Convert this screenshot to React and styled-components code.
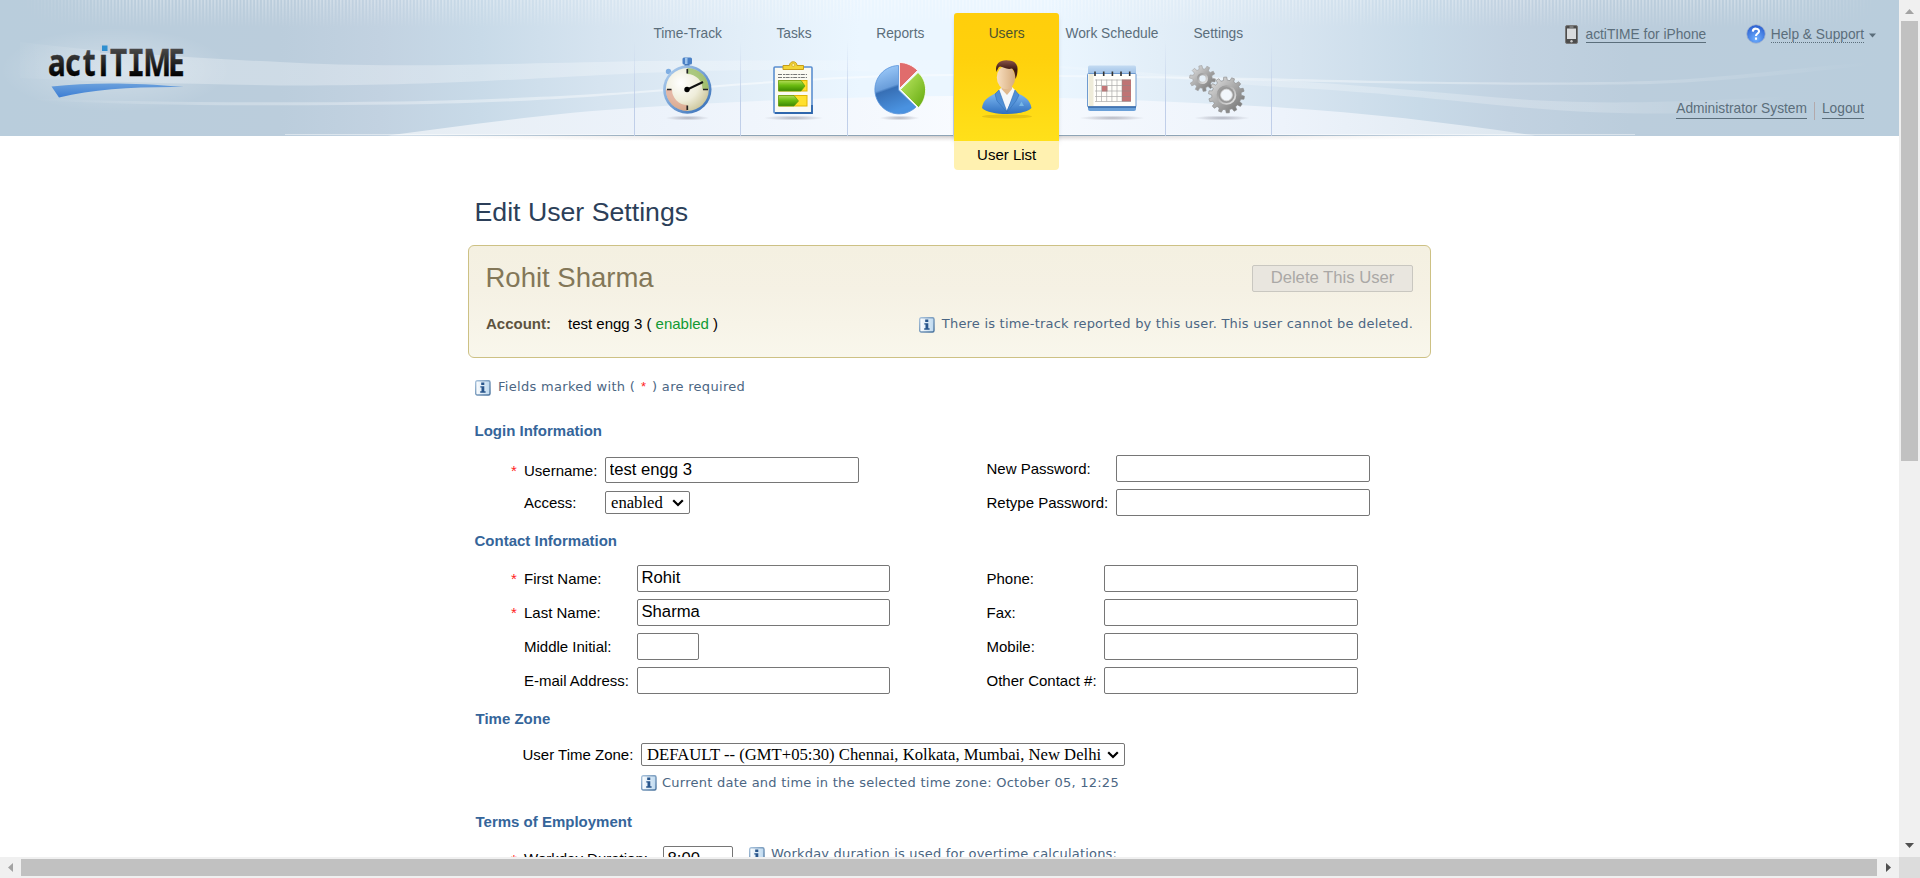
import React from "react";
import styled, { createGlobalStyle, css } from "styled-components";

const sans = `"Liberation Sans", Arial, sans-serif`;
const serif = `"Liberation Serif", "Times New Roman", serif`;
const verdana = `Verdana, "DejaVu Sans", sans-serif`;

const GlobalStyle = createGlobalStyle`
  html, body { margin: 0; padding: 0; background: #fff; }
  body { overflow: hidden; }
  * { box-sizing: border-box; }
`;

const Window = styled.div`
  display: grid;
  grid-template: 857px 21px / 1899px 21px;
  width: 1920px;
  height: 878px;
  overflow: hidden;
  font: 15px/17px ${sans};
  color: #000;
`;

const Page = styled.div`
  overflow: hidden;
  background: #fff;
`;

/* ---------- header ---------- */

const Header = styled.header`
  position: relative;
  display: grid;
  grid-template-columns: 634px 638px 1fr;
  height: 136px;
  background: linear-gradient(
    90deg,
    #b9cddc 0, #bbcddc 280px, #c2d2e1 380px, #c8dae8 480px, #d6e4f0 600px, #e2eef8 740px,
    #ebf6ff 860px, #ebf6ff 1050px, #e2eef8 1160px, #d6e4f0 1300px, #c8dae8 1420px,
    #c2d2e1 1510px, #bbcddc 1630px, #b9cddc 1899px
  );
`;

const Waves = styled.svg`
  position: absolute;
  left: 0;
  top: 0;
  pointer-events: none;
`;

const Brand = styled.div`
  position: relative;
`;

const BrandMark = styled.svg`
  display: block;
  margin: 36px 0 0 40px;
`;

const Nav = styled.nav`
  position: relative;
  display: flex;
`;

const NavLine = styled.span`
  flex: none;
  width: 1px;
  height: 136px;
  background: linear-gradient(rgba(190, 205, 232, 0) 30%, rgba(190, 205, 232, 0.95) 75%);
`;

const NavItem = styled.a`
  position: relative;
  display: flex;
  flex-direction: column;
  flex: 1 1 0;
  min-width: 0;
  height: 136px;
  padding-top: 13px;
  color: #5b6e7b;
  text-decoration: none;
  ${(p) => p.$active && css`
    z-index: 1;
    margin: 0 -1px 0 0;
    color: #4b5330;
  `}
`;

const NavFace = styled.span`
  display: flex;
  flex-direction: column;
  align-items: center;
  flex: none;
  height: 128px;
  ${(p) => p.$active && css`
    border-radius: 3px 3px 0 0;
    background: linear-gradient(#ffce0c, #ffd10c 35%, #ffe01a);
    box-shadow: 0 3px 5px -2px rgba(90, 110, 130, 0.5);
  `}
`;

const NavLabel = styled.span`
  margin-top: 13px;
  font-size: 13.75px;
  line-height: 15px;
  white-space: nowrap;
`;

const NavIcon = styled.svg`
  display: block;
  flex: none;
  margin-top: 9px;
`;

const SubMenu = styled.span`
  flex: none;
  height: 29px;
  border-radius: 0 0 4px 4px;
  background: #fff1b0;
  color: #000;
  font-size: 15px;
  line-height: 28px;
  text-align: center;
`;

const Tools = styled.div`
  position: relative;
  display: flex;
  flex-direction: column;
  justify-content: space-between;
  padding: 24px 23px 16px 0;
  color: #5b6e7b;
  font-size: 13.75px;
  line-height: 15px;
`;

const ToolRow = styled.div`
  display: flex;
  align-items: flex-start;
  justify-content: flex-end;
  padding-right: ${(p) => p.$right || 0}px;
`;

const ToolLink = styled.a`
  margin-top: ${(p) => p.$top || 0}px;
  padding-bottom: ${(p) => p.$pad || 0}px;
  border-bottom: 1px ${(p) => (p.$dotted ? "dotted" : "solid")} #5b6e7b;
  color: inherit;
  text-decoration: none;
`;

const ToolIcon = styled.svg`
  display: block;
  flex: none;
  margin: ${(p) => p.$m};
`;

const Divider = styled.span`
  width: 1px;
  height: 18px;
  margin: 1px 7px 0;
  background: #b3a9ab;
`;

/* ---------- content ---------- */

const Main = styled.main`
  padding: 61px 0 0 468px;
`;

const Title = styled.h1`
  margin: 0 0 18px 6.5px;
  color: #2c3f59;
  font-size: 26.7px;
  font-weight: 400;
  line-height: 30px;
`;

const UserPanel = styled.section`
  display: flex;
  flex-direction: column;
  width: 963px;
  height: 113px;
  padding: 19px 17px 0 17px;
  border: 1px solid #cdc184;
  border-radius: 6px;
  background: linear-gradient(#f4f0e1, #f5f1e4 40%, #f9f7ec);
`;

const PanelRow = styled.div`
  display: flex;
  align-items: flex-start;
  justify-content: space-between;
`;

const UserName = styled.h2`
  margin: -3px 0 0 -0.5px;
  color: #837758;
  font-size: 27.5px;
  font-weight: 400;
  line-height: 31px;
`;

const DeleteButton = styled.button`
  width: 161px;
  height: 27px;
  padding: 0 0 2px;
  border: 1px solid #c9c7c0;
  border-radius: 2px;
  background: #e9e6df;
  color: #aaa8a6;
  font: 16.67px/19px ${sans};
`;

const Account = styled.div`
  margin-top: 22px;
  b { margin-right: 17px; color: #5d533f; }
  span { color: #109a33; }
`;

const Hint = styled.div`
  display: flex;
  align-items: flex-start;
  gap: ${(p) => p.$gap || 8}px;
  margin: ${(p) => p.$m || 0};
  color: #4b6683;
  font: 13px/15px ${verdana};
  letter-spacing: ${(p) => p.$ls || 0.2}px;
  white-space: pre;
  svg { flex: none; display: block; }
`;

const HintText = styled.span`
  margin-top: ${(p) => p.$shift || 0}px;
`;

const Star = styled.span`
  margin: 0 1.5px;
  color: #f22;
  font-family: ${sans};
  letter-spacing: 0;
`;

const SectionTitle = styled.h3`
  margin: ${(p) => p.$top || 16}px 0 0 ${(p) => p.$left || 6.5}px;
  color: #35659a;
  font-size: 15px;
  line-height: 17px;
`;

const Columns = styled.div`
  display: grid;
  grid-template-columns: 475.5px 1fr;
  margin: 16px 0 0 43px;
`;

const SingleField = styled.div`
  margin: 16px 0 0 ${(p) => p.$left || 43}px;
`;

const Fields = styled.div`
  display: flex;
  flex-direction: column;
  gap: ${(p) => (p.$gap === undefined ? 7 : p.$gap)}px;
  padding-top: ${(p) => p.$top || 0}px;
`;

const Field = styled.div`
  display: flex;
  align-items: flex-start;
`;

const Mark = styled.span`
  flex: none;
  width: 13px;
  line-height: 27px;
  color: #f22;
`;

const Label = styled.label`
  flex: none;
  width: ${(p) => p.$w}px;
  line-height: ${(p) => p.$lh || 27}px;
  white-space: nowrap;
`;

const Input = styled.input`
  width: ${(p) => p.$w || 254}px;
  height: ${(p) => p.$h || 27}px;
  margin: 0;
  padding: 0 3px ${(p) => (p.$h ? 0 : 2)}px 3.5px;
  border: 1px solid #767676;
  border-radius: 2px;
  background: #fff;
  color: #000;
  font: 16.67px/19px ${sans};
  outline: none;
`;

const SelectBox = styled.span`
  position: relative;
  display: block;
  flex: none;
  width: ${(p) => p.$w}px;
  height: 23px;
  margin-top: ${(p) => p.$top || 0}px;
  svg { position: absolute; right: 6px; top: 8px; pointer-events: none; }
`;

const SelectInput = styled.select`
  appearance: none;
  display: block;
  width: 100%;
  height: 23px;
  padding: 0 0 0 5px;
  border: 1px solid #767676;
  border-radius: 2px;
  background: #fff;
  color: #000;
  font: 16.67px/21px ${serif};
`;

/* ---------- scroll bars ---------- */

const VScroll = styled.div`
  display: flex;
  flex-direction: column;
  align-items: center;
  background: #f0f0f0;
`;

const HScroll = styled.div`
  display: flex;
  align-items: center;
  background: #f0f0f0;
`;

const Arrow = styled.svg`
  display: block;
  flex: none;
  margin: ${(p) => p.$m || 0};
`;

const VThumb = styled.div`
  width: 17px;
  height: 440px;
  background: #c1c1c1;
`;

const HThumb = styled.div`
  width: 1856px;
  height: 17px;
  background: #c1c1c1;
`;

const Corner = styled.div`
  background: #dcdcdc;
`;

/* ---------- drawings ---------- */

function HeaderArt() {
  return (
    <Waves width="1899" height="142" viewBox="0 0 1899 142">
      <defs>
        <pattern id="stripes" width="3.4" height="30" patternUnits="userSpaceOnUse">
          <rect width="1.5" height="30" fill="#fff" />
        </pattern>
        <linearGradient id="fadeY" x1="0" y1="0" x2="0" y2="1">
          <stop offset="0" stopColor="#fff" stopOpacity=".34" />
          <stop offset="1" stopColor="#fff" stopOpacity="0" />
        </linearGradient>
        <linearGradient id="fadeX" x1="0" y1="0" x2="1" y2="0">
          <stop offset="0" stopColor="#fff" stopOpacity="0" />
          <stop offset=".06" stopColor="#fff" />
          <stop offset=".94" stopColor="#fff" />
          <stop offset="1" stopColor="#fff" stopOpacity="0" />
        </linearGradient>
        <mask id="stripeY"><rect width="1899" height="28" fill="url(#fadeY)" /></mask>
        <mask id="stripeX"><rect x="20" width="1859" height="28" fill="url(#fadeX)" /></mask>
        <linearGradient id="bandL" gradientUnits="userSpaceOnUse" x1="0" y1="0" x2="900" y2="0">
          <stop offset="0" stopColor="#fff" stopOpacity="0" />
          <stop offset=".2" stopColor="#fff" stopOpacity=".28" />
          <stop offset=".75" stopColor="#fff" stopOpacity=".28" />
          <stop offset="1" stopColor="#fff" stopOpacity=".1" />
        </linearGradient>
        <linearGradient id="lineX" gradientUnits="userSpaceOnUse" x1="30" y1="0" x2="1875" y2="0">
          <stop offset="0" stopColor="#fff" stopOpacity="0" />
          <stop offset=".1" stopColor="#fff" stopOpacity=".25" />
          <stop offset=".4" stopColor="#fff" stopOpacity=".5" />
          <stop offset=".75" stopColor="#fff" stopOpacity=".35" />
          <stop offset="1" stopColor="#fff" stopOpacity="0" />
        </linearGradient>
        <linearGradient id="bandR" gradientUnits="userSpaceOnUse" x1="1000" y1="0" x2="1790" y2="0">
          <stop offset="0" stopColor="#fff" stopOpacity=".1" />
          <stop offset=".4" stopColor="#fff" stopOpacity=".25" />
          <stop offset=".75" stopColor="#fff" stopOpacity=".2" />
          <stop offset="1" stopColor="#fff" stopOpacity="0" />
        </linearGradient>
        <linearGradient id="hill" x1="0" y1="0" x2="1" y2="0">
          <stop offset="0" stopColor="#e6edf3" />
          <stop offset=".25" stopColor="#edf3fb" />
          <stop offset=".5" stopColor="#f8fbff" />
          <stop offset=".78" stopColor="#edf3fb" />
          <stop offset="1" stopColor="#dde7ef" />
        </linearGradient>
        <linearGradient id="base" x1="0" y1="0" x2="1" y2="0">
          <stop offset="0" stopColor="#8ea4b6" stopOpacity="0" />
          <stop offset=".25" stopColor="#8ea4b6" />
          <stop offset=".75" stopColor="#8ea4b6" />
          <stop offset="1" stopColor="#8ea4b6" stopOpacity="0" />
        </linearGradient>
        <radialGradient id="shade">
          <stop offset="0" stopColor="#c4bfbf" stopOpacity=".8" />
          <stop offset="1" stopColor="#e4e0e0" stopOpacity="0" />
        </radialGradient>
        <radialGradient id="glow" cx=".5" cy=".5" r=".5">
          <stop offset="0" stopColor="#fff" stopOpacity=".32" />
          <stop offset="1" stopColor="#fff" stopOpacity="0" />
        </radialGradient>
        <clipPath id="below"><rect x="0" y="136" width="1899" height="6" /></clipPath>
      </defs>
      <g mask="url(#stripeX)"><g mask="url(#stripeY)"><rect width="1899" height="28" fill="url(#stripes)" /></g></g>
      <ellipse cx="115" cy="70" rx="115" ry="42" fill="url(#glow)" />
      <path d="M20 42C100 52 190 58 280 62C370 67 430 66 640 61L940 60L940 75C830 68 740 69 640 73C520 79 430 86 280 85.5C190 84 110 82 20 78Z" fill="url(#bandL)" />
      <path d="M30 98C150 103 280 103 400 101.500C520 99 600 94 640 91C760 82 850 74 954 74C1080 75 1180 77 1280 78.500C1400 82 1560 84 1650 81C1740 77 1810 66 1875 62L1875 65C1810 71 1740 81 1650 84C1560 86 1400 84 1280 81C1180 78.500 1080 76.500 954 76C850 76 760 84 640 93C600 96 520 103 400 104.500C280 106 150 106 30 100Z" fill="url(#lineX)" />
      <path d="M1060 66C1150 72 1220 80 1280 80.500C1380 86 1450 94 1530 100C1620 105 1700 102 1860 92L1860 104C1760 113 1640 118 1530 108C1440 100 1380 92 1280 87C1200 82 1130 74 1060 68Z" fill="url(#bandR)" />
      <path d="M388 135.500C470 125 550 113 640 107.500C740 101 840 97 950 96C1060 97 1180 101 1280 107.500C1370 113 1450 123 1535 135.500Z" fill="url(#hill)" />
      <rect x="285" y="134" width="1350" height="1" fill="#fff" opacity=".45" />
      <rect x="400" y="135" width="1100" height="1" fill="url(#base)" />
      <ellipse cx="953" cy="136" rx="560" ry="6" fill="url(#shade)" clipPath="url(#below)" />
    </Waves>
  );
}

function Logo() {
  const noto = `"Noto Sans", "Open Sans", sans-serif`;
  const mono = `"DejaVu Sans Mono", monospace`;
  return (
    <BrandMark width="160" height="66" viewBox="0 0 160 66">
      <defs>
        <linearGradient id="ink" gradientUnits="userSpaceOnUse" x1="0" y1="13" x2="0" y2="40">
          <stop offset="0" stopColor="#484848" />
          <stop offset="1" stopColor="#000" />
        </linearGradient>
        <linearGradient id="swoosh" x1="0" y1="0" x2="0" y2="1">
          <stop offset="0" stopColor="#6aa0dc" />
          <stop offset="1" stopColor="#3b7dd4" />
        </linearGradient>
      </defs>
      <text transform="scale(.8 1)" y="40" fontFamily={noto} fontWeight="700" fontSize="37" fill="url(#ink)" stroke="url(#ink)" strokeWidth=".4">
        <tspan x="10">a</tspan><tspan x="31.500">c</tspan><tspan x="53.500">t</tspan><tspan x="73.800">i</tspan>
        <tspan x="87.500">T</tspan><tspan x="109" fontFamily={mono} fontSize="36.600">I</tspan>
        <tspan x="129">M</tspan><tspan x="160">E</tspan>
      </text>
      <rect x="60" y="8" width="10" height="9" fill="#bfd0df" />
      <rect x="62" y="9.500" width="5.500" height="5.500" fill="#2f8fd0" />
      <path d="M11.500 50.500C50 46.500 90 46.500 144 51C95 50.500 55 53 19 61.500Z" fill="url(#swoosh)" />
    </BrandMark>
  );
}

function Shadow({ x, w }) {
  return <ellipse cx={x} cy="68" rx={w} ry="2.500" fill="url(#floor)" />;
}

function Stopwatch() {
  return (
    <NavIcon width="106" height="80" viewBox="0 0 106 80">
      <defs>
        <radialGradient id="floor"><stop offset="0" stopColor="#667" stopOpacity=".45" /><stop offset="1" stopColor="#667" stopOpacity="0" /></radialGradient>
        <linearGradient id="rim" x1="0" y1="0" x2="1" y2="1"><stop offset="0" stopColor="#b9d6f3" /><stop offset="1" stopColor="#2e69b5" /></linearGradient>
        <radialGradient id="dial" cx=".35" cy=".35" r=".7"><stop offset="0" stopColor="#fff" /><stop offset=".6" stopColor="#efedda" /><stop offset="1" stopColor="#cfc9a0" /></radialGradient>
      </defs>
      <Shadow x="52.500" w="22" />
      <rect x="49.500" y="10" width="5" height="6" fill="#3f6fae" />
      <rect x="47.500" y="7.500" width="9.500" height="7" rx="1.500" fill="#4a80c6" />
      <rect x="50" y="8" width="2.500" height="6" fill="#9cc3ec" />
      <circle cx="33.500" cy="21.500" r="2.700" fill="#7faee2" />
      <circle cx="52.300" cy="39.500" r="24.200" fill="url(#rim)" />
      <circle cx="52.300" cy="39.500" r="21.500" fill="url(#dial)" />
      <path d="M52.300 18A21.500 21.500 0 0 1 73.800 39.500H67.500A15 15 0 0 0 52.300 24Z" fill="#7cae3e" opacity=".6" />
      <path d="M52.300 61A21.500 21.500 0 0 1 30.800 39.500H37A15.500 15.500 0 0 0 52.300 55Z" fill="#d8806c" opacity=".5" />
      <path d="M52.300 19V23.500M52.300 55.500V60M32 39.500H36.500M68 39.500H73" stroke="#222" strokeWidth="1.700" />
      <path d="M52.300 39.500L68 32" stroke="#111" strokeWidth="2" />
      <circle cx="52" cy="39.500" r="2.700" fill="#000" />
    </NavIcon>
  );
}

function Clipboard() {
  return (
    <NavIcon width="106" height="80" viewBox="0 0 106 80">
      <defs>
        <linearGradient id="bar" x1="0" y1="0" x2="0" y2="1"><stop offset="0" stopColor="#b4dd58" /><stop offset=".45" stopColor="#6cbc12" /><stop offset="1" stopColor="#3c8a00" /></linearGradient>
      </defs>
      <Shadow x="52.500" w="30" />
      <rect x="33" y="17" width="38" height="46" rx="1" fill="#fbfaf2" stroke="#5b8fd0" strokeWidth="1.600" />
      <path d="M34 63H71V55" fill="none" stroke="#2f67ad" strokeWidth="1.800" />
      <path d="M37 24.500H66M37 27.500H66" stroke="#777" strokeWidth="1" strokeDasharray="4 1 2 .6" />
      <rect x="38" y="30.500" width="28" height="10.500" fill="#ffe02c" stroke="#e0b400" />
      <rect x="38" y="45.500" width="28" height="10.500" fill="#ffe02c" stroke="#e0b400" />
      <path d="M37.500 30.500H60L64 36L60 41H37.500Z" fill="url(#bar)" stroke="#5a9a10" strokeWidth=".7" />
      <path d="M37.500 45.500H53L57.500 51L53 56H37.500Z" fill="url(#bar)" stroke="#5a9a10" strokeWidth=".7" />
      <path d="M42 15.500H48.500C48.500 10.500 56 10.500 56 15.500H62.500V19.500H42Z" fill="#f3d536" stroke="#c79d18" />
      <circle cx="52.300" cy="15" r="1.500" fill="#fff3a0" stroke="#c79d18" strokeWidth=".6" />
    </NavIcon>
  );
}

function Pie() {
  return (
    <NavIcon width="106" height="80" viewBox="0 0 106 80">
      <defs>
        <linearGradient id="pieBlue" x1="0" y1="0" x2=".3" y2="1"><stop offset="0" stopColor="#a6d2ff" /><stop offset=".5" stopColor="#6a9edb" /><stop offset=".55" stopColor="#376fb5" /><stop offset="1" stopColor="#4a92e0" /></linearGradient>
        <linearGradient id="pieGreen" x1="0" y1="0" x2="1" y2="1"><stop offset="0" stopColor="#c1ea68" /><stop offset="1" stopColor="#62a90c" /></linearGradient>
      </defs>
      <Shadow x="52.500" w="20" />
      <path d="M51.500 40V15.500A24.200 24.200 0 1 0 69 57Z" fill="url(#pieBlue)" stroke="#5b94da" strokeWidth=".8" />
      <path d="M52.500 38.500V12.500C59 12.500 66 15.500 70.500 20.500Z" fill="#e06c6c" stroke="#fff" strokeWidth=".8" />
      <path d="M53.500 39.500L71 22.500C81 31 81 48 71.500 57.500Z" fill="url(#pieGreen)" stroke="#fff" strokeWidth=".8" />
    </NavIcon>
  );
}

function Person() {
  return (
    <NavIcon width="106" height="80" viewBox="0 0 106 80">
      <defs>
        <linearGradient id="suit" x1="0" y1="0" x2="0" y2="1"><stop offset="0" stopColor="#82bdf4" /><stop offset="1" stopColor="#2f6fc0" /></linearGradient>
        <linearGradient id="skin" x1="0" y1="0" x2="1" y2="0"><stop offset="0" stopColor="#f8dfc0" /><stop offset="1" stopColor="#d6ab7c" /></linearGradient>
        <linearGradient id="hair" x1="0" y1="0" x2="0" y2="1"><stop offset="0" stopColor="#8a5448" /><stop offset=".5" stopColor="#3c1712" /><stop offset="1" stopColor="#542519" /></linearGradient>
      </defs>
      <ellipse cx="53" cy="66.500" rx="25" ry="2" fill="#7a5a00" opacity=".18" />
      <path d="M28 58C29 49 36 46 44 42H61C70 46 76 49 77.500 58C70 66 36 66 28 58Z" fill="url(#suit)" />
      <path d="M44 41L52.500 61L62 41L57 36H49Z" fill="#f4f7fa" />
      <path d="M45 40L41 44L43 51L53 62ZM61 40L65 45L62 51L53 62Z" fill="#4f8fd6" stroke="#326eb6" strokeWidth=".6" />
      <path d="M48 32H58V39L53 45L47.500 39Z" fill="#e0b98e" />
      <ellipse cx="52" cy="27.500" rx="9.200" ry="11.500" fill="url(#skin)" />
      <path d="M42.500 22C40 13 48 9.500 54 10.500C60 10 64 14 63.500 20C63.500 24 62.500 27 61.500 29C61 23 60 20 58 18.500C53 20 49 17 46 16.500C44 17 43.500 20 42.500 22Z" fill="url(#hair)" />
      <path d="M65 56L67.500 51.500L70 56Z" fill="#78b8e8" />
    </NavIcon>
  );
}

function Calendar() {
  return (
    <NavIcon width="106" height="80" viewBox="0 0 106 80">
      <defs>
        <linearGradient id="calTop" x1="0" y1="0" x2="0" y2="1"><stop offset="0" stopColor="#c4dbf2" /><stop offset="1" stopColor="#8fb6e2" /></linearGradient>
      </defs>
      <Shadow x="53" w="33" />
      <rect x="29" y="15.500" width="48" height="12" rx="1.500" fill="url(#calTop)" />
      <rect x="29" y="54" width="48" height="7" rx="2" fill="#6aa0d8" />
      <rect x="28.500" y="23.500" width="48.500" height="33.500" rx="1" fill="#fffefa" stroke="#6f9bd0" />
      <path d="M29 57H77" stroke="#3568a8" strokeWidth="1.500" />
      <rect x="29.500" y="24" width="5" height="32" fill="#efecd9" />
      <rect x="63" y="29.500" width="9" height="22" fill="#b45a5c" opacity=".85" />
      <rect x="43" y="36" width="5.500" height="5.500" fill="#c77677" />
      <path d="M37.500 29.500V51.500M42.500 29.500V51.500M47.700 29.500V51.500M52.900 29.500V51.500M58 29.500V51.500M63 29.500V51.500M36 30H72M36 35.500H72M36 41H72M36 46.500H72M36 51.500H72" stroke="#888" strokeWidth=".7" opacity=".7" />
      <path d="M36 21.500V26M44.700 21.500V26M53.400 21.500V26M62 21.500V26M70.700 21.500V26" stroke="#333" strokeWidth="1.600" />
    </NavIcon>
  );
}

function gear(cx, cy, r, teeth, depth) {
  const pts = [];
  const step = (Math.PI * 2) / teeth;
  for (let i = 0; i < teeth; i += 1) {
    const a = i * step + 0.15;
    [[-0.3, r - depth], [-0.19, r], [0.19, r], [0.3, r - depth]].forEach(([o, d]) => {
      pts.push(`${(cx + Math.cos(a + o * step) * d).toFixed(2)} ${(cy + Math.sin(a + o * step) * d).toFixed(2)}`);
    });
  }
  return `M${pts.join("L")}Z`;
}

function Gears() {
  return (
    <NavIcon width="106" height="80" viewBox="0 0 106 80">
      <defs>
        <linearGradient id="steel" x1="0" y1="0" x2="1" y2="1"><stop offset="0" stopColor="#e6e6e6" /><stop offset=".5" stopColor="#a8a8a8" /><stop offset="1" stopColor="#6a6a6a" /></linearGradient>
        <linearGradient id="steelRing" x1="0" y1="0" x2="1" y2="1"><stop offset="0" stopColor="#8a8a8a" /><stop offset="1" stopColor="#ececec" /></linearGradient>
      </defs>
      <Shadow x="57" w="28" />
      <path d={gear(37.5, 28.5, 13, 10, 3.3)} fill="url(#steel)" stroke="#a0a0a0" strokeWidth=".6" />
      <circle cx="37.500" cy="28.500" r="5.500" fill="url(#steelRing)" />
      <circle cx="37.500" cy="28.500" r="3.200" fill="#e6f0f8" />
      <path d={gear(61.5, 45, 18, 14, 3.2)} fill="url(#steel)" stroke="#8a8a8a" strokeWidth=".6" />
      <circle cx="61.500" cy="45" r="9.800" fill="url(#steelRing)" />
      <circle cx="61.500" cy="45" r="8" fill="#989898" />
      <circle cx="61.500" cy="45" r="5.800" fill="#f1f6fb" stroke="#ddd" strokeWidth=".8" />
    </NavIcon>
  );
}

function InfoIcon() {
  return (
    <svg width="16" height="16" viewBox="0 0 16 16">
      <defs>
        <linearGradient id="infoEdge" x1="0" y1="0" x2="1" y2="1"><stop offset="0" stopColor="#a9c3dc" /><stop offset="1" stopColor="#47719c" /></linearGradient>
        <linearGradient id="infoFill" x1="0" y1="0" x2="1" y2="0"><stop offset="0" stopColor="#fff" /><stop offset="1" stopColor="#bcd8ef" /></linearGradient>
      </defs>
      <rect x=".7" y=".7" width="14.300" height="14.300" rx="1.500" fill="url(#infoFill)" stroke="url(#infoEdge)" strokeWidth="1.400" />
      <path d="M6.200 2.600H9.300V4.900H6.200ZM5.300 6.200H9.300V11.300H10.600V12.800H5.200V11.300H6.500V7.600H5.300Z" fill="#29568c" />
    </svg>
  );
}

function Select({ width, top, value }) {
  return (
    <SelectBox $w={width} $top={top}>
      <SelectInput defaultValue={value}>
        <option>{value}</option>
      </SelectInput>
      <svg width="12" height="8" viewBox="0 0 12 8"><path d="M1.200 1.200L6 6L10.800 1.200" fill="none" stroke="#000" strokeWidth="2.200" /></svg>
    </SelectBox>
  );
}

function Info({ children, shift, ...rest }) {
  return (
    <Hint {...rest}>
      <InfoIcon />
      <HintText $shift={shift}>{children}</HintText>
    </Hint>
  );
}

function FieldRow({ label, required, mark = true, lw, lh, children }) {
  return (
    <Field>
      {mark && <Mark>{required ? "*" : ""}</Mark>}
      <Label $w={lw} $lh={lh}>{label}</Label>
      {children}
    </Field>
  );
}

const tabs = [
  { label: "Time-Track", Icon: Stopwatch },
  { label: "Tasks", Icon: Clipboard },
  { label: "Reports", Icon: Pie },
  { label: "Users", Icon: Person, sub: "User List" },
  { label: "Work Schedule", Icon: Calendar },
  { label: "Settings", Icon: Gears },
];

export default function App() {
  return (
    <Window>
      <GlobalStyle />
      <Page>
        <Header>
          <HeaderArt />
          <Brand><Logo /></Brand>
          <Nav>
            <NavLine />
            {tabs.map(({ label, Icon, sub }) => (
              <React.Fragment key={label}>
                <NavItem $active={!!sub}>
                  <NavFace $active={!!sub}>
                    <NavLabel>{label}</NavLabel>
                    <Icon />
                  </NavFace>
                  {sub && <SubMenu>{sub}</SubMenu>}
                </NavItem>
                <NavLine />
              </React.Fragment>
            ))}
          </Nav>
          <Tools>
            <ToolRow>
              <ToolIcon $m="1px 8px 0 0" width="13" height="19" viewBox="0 0 13 19">
                <rect x=".5" y=".5" width="12" height="18" rx="1.500" fill="#4c4c4c" stroke="#777" />
                <rect x="2" y="3.500" width="9" height="10.500" fill="#d9dbdd" />
                <path d="M4.500 2H8.500" stroke="#aaa" />
                <circle cx="6.500" cy="16.300" r="1.200" fill="#ccc" />
              </ToolIcon>
              <ToolLink $top={3}>actiTIME for iPhone</ToolLink>
              <ToolIcon $m="0 5px 0 39.500px" width="20" height="20" viewBox="0 0 20 20">
                <defs><radialGradient id="ball" cx=".5" cy=".75" r=".7"><stop offset="0" stopColor="#6fb0ff" /><stop offset="1" stopColor="#2d62d2" /></radialGradient></defs>
                <circle cx="10" cy="10" r="9.300" fill="url(#ball)" stroke="#a9b8cc" strokeWidth=".8" />
                <path d="M6.800 7.600C6.900 3.600 13.400 3.800 13 7.600C12.700 9.600 10 9.500 10 12M10 13.400V15.800" fill="none" stroke="#fff" strokeWidth="2.100" />
              </ToolIcon>
              <ToolLink $top={3} $dotted>Help &amp; Support</ToolLink>
              <ToolIcon $m="9px 0 0 5px" width="7" height="5" viewBox="0 0 7 5"><path d="M0 .5H7L3.500 4.500Z" fill="#5b6e7b" /></ToolIcon>
            </ToolRow>
            <ToolRow $right={12}>
              <ToolLink $pad={2}>Administrator System</ToolLink>
              <Divider />
              <ToolLink $pad={2}>Logout</ToolLink>
            </ToolRow>
          </Tools>
        </Header>

        <Main>
          <Title>Edit User Settings</Title>
          <UserPanel>
            <PanelRow>
              <UserName>Rohit Sharma</UserName>
              <DeleteButton disabled>Delete This User</DeleteButton>
            </PanelRow>
            <PanelRow>
              <Account><b>Account:</b>test engg 3 ( <span>enabled</span> )</Account>
              <Info $m="24px 0 0" $gap={6.5} $ls={0.21} shift={-1}>
                There is time-track reported by this user. This user cannot be deleted.
              </Info>
            </PanelRow>
          </UserPanel>
          <Info $m="22px 0 0 7px" $gap={7} $ls={0.3} shift={-1}>
            Fields marked with ( <Star>*</Star> ) are required
          </Info>

          <SectionTitle $top={26}>Login Information</SectionTitle>
          <Columns>
            <Fields $top={2} $gap={5}>
              <FieldRow label="Username:" required lw={81}><Input $h={26} defaultValue="test engg 3" /></FieldRow>
              <FieldRow label="Access:" lw={81}><Select width={85} top={2} value="enabled" /></FieldRow>
            </Fields>
            <Fields>
              <FieldRow label="New Password:" mark={false} lw={129.5}><Input /></FieldRow>
              <FieldRow label="Retype Password:" mark={false} lw={129.5}><Input /></FieldRow>
            </Fields>
          </Columns>

          <SectionTitle>Contact Information</SectionTitle>
          <Columns>
            <Fields>
              <FieldRow label="First Name:" required lw={113}><Input $w={253} defaultValue="Rohit" /></FieldRow>
              <FieldRow label="Last Name:" required lw={113}><Input $w={253} defaultValue="Sharma" /></FieldRow>
              <FieldRow label="Middle Initial:" lw={113}><Input $w={62} /></FieldRow>
              <FieldRow label="E-mail Address:" lw={113}><Input $w={253} /></FieldRow>
            </Fields>
            <Fields>
              {["Phone:", "Fax:", "Mobile:", "Other Contact #:"].map((label) => (
                <FieldRow key={label} label={label} mark={false} lw={117.5}><Input /></FieldRow>
              ))}
            </Fields>
          </Columns>

          <SectionTitle $left={7.5}>Time Zone</SectionTitle>
          <SingleField $left={54.5}>
            <FieldRow label="User Time Zone:" mark={false} lw={118.5} lh={23}>
              <Select width={484} value="DEFAULT -- (GMT+05:30) Chennai, Kolkata, Mumbai, New Delhi" />
            </FieldRow>
          </SingleField>
          <Info $m="9px 0 0 173px" $gap={5} $ls={0.25}>
            Current date and time in the selected time zone: October 05, 12:25
          </Info>

          <SectionTitle $top={22} $left={7.5}>Terms of Employment</SectionTitle>
          <SingleField>
            <FieldRow label="Workday Duration:" required lw={139} lh={25}>
              <Input $w={70} defaultValue="8:00" />
              <Info $m="1px 0 0 16px" $gap={6} $ls={0.2} shift={-1}>Workday duration is used for overtime calculations:</Info>
            </FieldRow>
          </SingleField>
        </Main>
      </Page>

      <VScroll>
        <Arrow $m="9px 0 7px" width="9" height="5" viewBox="0 0 9 5"><path d="M0 5L4.500 0L9 5Z" fill="#a3a3a3" /></Arrow>
        <VThumb />
        <Arrow $m="382px 0 0" width="9" height="5" viewBox="0 0 9 5"><path d="M0 0L4.500 5L9 0Z" fill="#505050" /></Arrow>
      </VScroll>
      <HScroll>
        <Arrow $m="0 8px" width="5" height="9" viewBox="0 0 5 9"><path d="M5 0L0 4.500L5 9Z" fill="#a3a3a3" /></Arrow>
        <HThumb />
        <Arrow $m="0 0 0 9px" width="5" height="9" viewBox="0 0 5 9"><path d="M0 0L5 4.500L0 9Z" fill="#505050" /></Arrow>
      </HScroll>
      <Corner />
    </Window>
  );
}
